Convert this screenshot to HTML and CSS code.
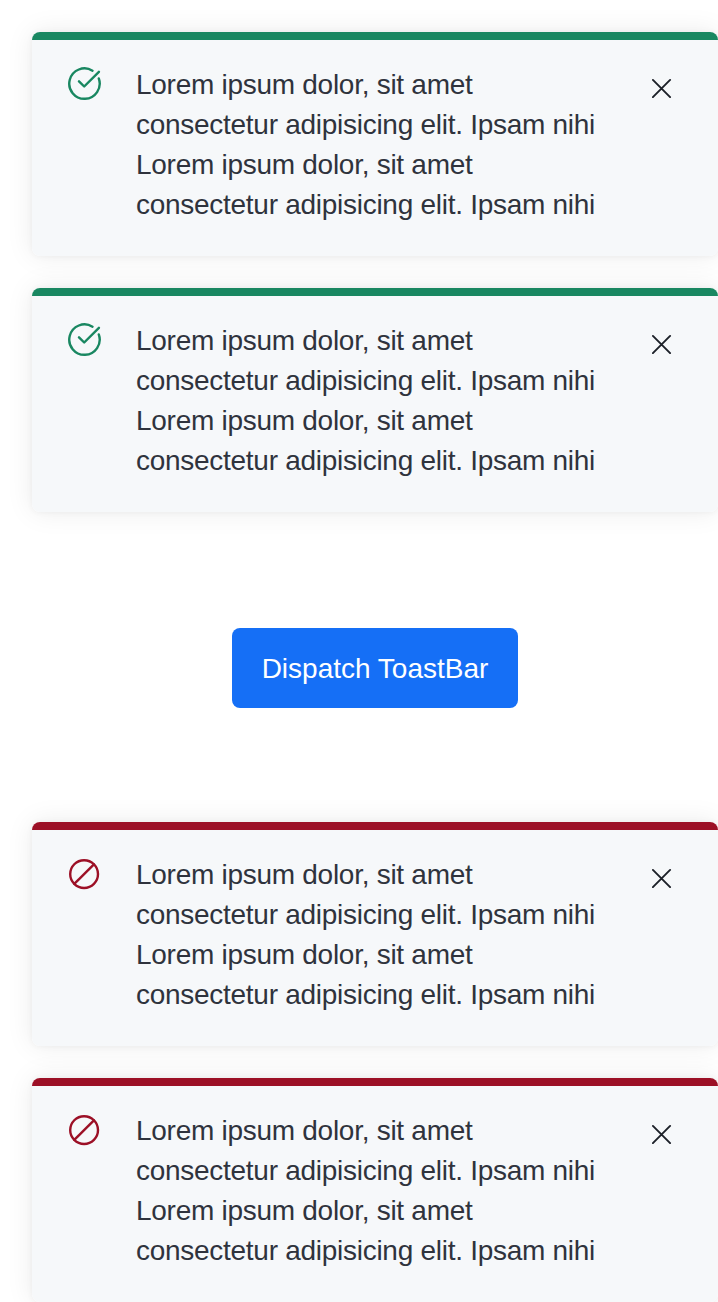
FILE: index.html
```
<!DOCTYPE html>
<html lang="en">
<head>
<meta charset="utf-8">
<title>ToastBar</title>
<link rel="stylesheet" href="styles.css">
</head>
<body>
<svg class="symbols" aria-hidden="true">
  <symbol id="check" viewBox="0 0 36 36">
    <path d="M26.5 4.7A15.2 15.2 0 1 0 32.8 12.5M13 15.3L18.2 20.5L32.9 5.8"/>
  </symbol>
  <symbol id="ban" viewBox="0 0 36 36">
    <circle cx="18.1" cy="18.1" r="13.9"/><path d="M8.3 27.9L27.9 8.3"/>
  </symbol>
  <symbol id="close" viewBox="0 0 20 20">
    <path d="M.9 1.9L18.1 19.1M18.1 1.9L.9 19.1"/>
  </symbol>
</svg>
<main class="page">
  <section class="stack">
    <article class="toast toast-success">
      <svg class="status"><use href="#check"/></svg>
      <p class="message">Lorem ipsum dolor, sit amet<br>consectetur adipisicing elit. Ipsam nihi<br>Lorem ipsum dolor, sit amet<br>consectetur adipisicing elit. Ipsam nihi</p>
      <button class="close" aria-label="Close"><svg class="close-icon"><use href="#close"/></svg></button>
    </article>
    <article class="toast toast-success">
      <svg class="status"><use href="#check"/></svg>
      <p class="message">Lorem ipsum dolor, sit amet<br>consectetur adipisicing elit. Ipsam nihi<br>Lorem ipsum dolor, sit amet<br>consectetur adipisicing elit. Ipsam nihi</p>
      <button class="close" aria-label="Close"><svg class="close-icon"><use href="#close"/></svg></button>
    </article>
  </section>
  <button class="dispatch">Dispatch ToastBar</button>
  <section class="stack">
    <article class="toast toast-error">
      <svg class="status"><use href="#ban"/></svg>
      <p class="message">Lorem ipsum dolor, sit amet<br>consectetur adipisicing elit. Ipsam nihi<br>Lorem ipsum dolor, sit amet<br>consectetur adipisicing elit. Ipsam nihi</p>
      <button class="close" aria-label="Close"><svg class="close-icon"><use href="#close"/></svg></button>
    </article>
    <article class="toast toast-error">
      <svg class="status"><use href="#ban"/></svg>
      <p class="message">Lorem ipsum dolor, sit amet<br>consectetur adipisicing elit. Ipsam nihi<br>Lorem ipsum dolor, sit amet<br>consectetur adipisicing elit. Ipsam nihi</p>
      <button class="close" aria-label="Close"><svg class="close-icon"><use href="#close"/></svg></button>
    </article>
  </section>
</main>
</body>
</html>
```
FILE: styles.css
```
* { box-sizing: border-box; }
body {
  margin: 0;
  background: #fff;
  color: #2f333d;
  font-family: "Liberation Sans", Arial, sans-serif;
  font-size: 28px;
  line-height: 40px;
  overflow: hidden;
}
.symbols { display: none; }
.page {
  display: flex;
  flex-direction: column;
  height: 1302px;
  padding: 32px 0 0 32px;
}
.stack {
  display: flex;
  flex-direction: column;
  gap: 32px;
}
.toast {
  display: flex;
  align-items: flex-start;
  height: 224px;
  padding: 33px 46px 0 34px;
  border-radius: 8px;
  background: linear-gradient(var(--accent) 8px, #f6f8fa 8px);
  box-shadow: 0 0 6px rgba(0, 0, 0, .05), 0 0 28px rgba(0, 0, 0, .08);
}
.toast-success { --accent: #198761; }
.toast-error { --accent: #9c1026; }
.status {
  flex: none;
  width: 36px;
  height: 36px;
  margin-top: 1px;
  fill: none;
  stroke: var(--accent);
  stroke-width: 2.4;
  stroke-linecap: round;
  stroke-linejoin: round;
}
.message {
  flex: 1;
  margin: 0 0 0 34px;
  white-space: nowrap;
  letter-spacing: -.275px;
}
.close {
  display: flex;
  margin-top: 13px;
  padding: 0;
  border: 0;
  background: none;
}
.close-icon {
  width: 20px;
  height: 20px;
  fill: none;
  stroke: #1c2028;
  stroke-width: 1.9;
  stroke-linecap: round;
}
.dispatch {
  align-self: center;
  flex: none;
  width: 286px;
  height: 80px;
  margin: 116px 0 114px;
  padding: 2px 0 0;
  border: 0;
  border-radius: 8px;
  background: #156ff6;
  color: #fff;
  font: inherit;
  letter-spacing: 0;
}
```
